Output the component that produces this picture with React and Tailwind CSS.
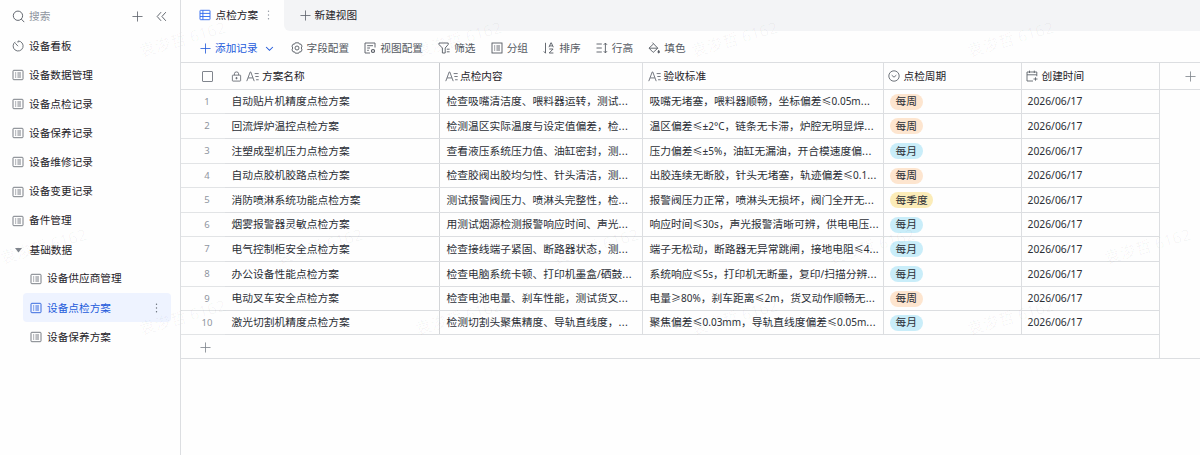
import clsx from "clsx";

const menu = [
  "设备数据管理",
  "设备点检记录",
  "设备保养记录",
  "设备维修记录",
  "设备变更记录",
  "备件管理",
];

const subMenu = ["设备供应商管理", "设备点检方案", "设备保养方案"];

const rows = [
  ["自动贴片机精度点检方案", "检查吸嘴清洁度、喂料器运转，测试...", "吸嘴无堵塞，喂料器顺畅，坐标偏差≤0.05m...", "每周"],
  ["回流焊炉温控点检方案", "检测温区实际温度与设定值偏差，检...", "温区偏差≤±2°C，链条无卡滞，炉腔无明显焊...", "每周"],
  ["注塑成型机压力点检方案", "查看液压系统压力值、油缸密封，测...", "压力偏差≤±5%，油缸无漏油，开合模速度偏...", "每月"],
  ["自动点胶机胶路点检方案", "检查胶阀出胶均匀性、针头清洁，测...", "出胶连续无断胶，针头无堵塞，轨迹偏差≤0.1...", "每周"],
  ["消防喷淋系统功能点检方案", "测试报警阀压力、喷淋头完整性，检...", "报警阀压力正常，喷淋头无损坏，阀门全开无...", "每季度"],
  ["烟雾报警器灵敏点检方案", "用测试烟源检测报警响应时间、声光...", "响应时间≤30s，声光报警清晰可辨，供电电压...", "每月"],
  ["电气控制柜安全点检方案", "检查接线端子紧固、断路器状态，测...", "端子无松动，断路器无异常跳闸，接地电阻≤4...", "每月"],
  ["办公设备性能点检方案", "检查电脑系统卡顿、打印机墨盒/硒鼓...", "系统响应≤5s，打印机无断墨，复印/扫描分辨...", "每月"],
  ["电动叉车安全点检方案", "检查电池电量、刹车性能，测试货叉...", "电量≥80%，刹车距离≤2m，货叉动作顺畅无...", "每周"],
  ["激光切割机精度点检方案", "检测切割头聚焦精度、导轨直线度，...", "聚焦偏差≤0.03mm，导轨直线度偏差≤0.05m...", "每月"],
];

const tagColors = {
  每周: "bg-[#fde5cf]",
  每月: "bg-[#c9edf9]",
  每季度: "bg-[#fbecb8]",
};

const columns = "grid grid-cols-[44px_215px_203px_241px_138px_138px_1fr]";

const Svg = ({ size = 12, className, children }) => (
  <svg
    width={size}
    height={size}
    viewBox="0 0 12 12"
    fill="none"
    stroke="currentColor"
    strokeWidth="0.9"
    className={clsx("shrink-0", className)}
  >
    {children}
  </svg>
);

const Plus = ({ size = 11, className }) => (
  <Svg size={size} className={className}>
    <path d="M6 .5v11M.5 6h11" />
  </Svg>
);

const ListIcon = () => (
  <Svg>
    <rect x="1" y="1.3" width="10" height="9.4" rx="0.8" />
    <path d="M3 4h1.2M3 6h1.2M3 8h1.2M5.4 4H9M5.4 6H9M5.4 8H9" />
  </Svg>
);

const TextIcon = () => (
  <Svg size={13} className="text-[#72767e]">
    <path d="M.7 10.3 3.9 1.8h.5l3.2 8.5M1.9 7.3h4.5M8 3.3h3.7M8.6 6h3.1M9.3 9h2.4" />
  </Svg>
);

const Dots = ({ className }) => (
  <svg width="3" height="10" viewBox="0 0 3 10" fill="currentColor" className={clsx("shrink-0", className)}>
    <circle cx="1.5" cy="1.2" r="0.7" />
    <circle cx="1.5" cy="5" r="0.7" />
    <circle cx="1.5" cy="8.8" r="0.7" />
  </svg>
);

// figures and units run a little narrower than the Chinese text around them
const CellText = ({ text }) => (
  <span>
    {text.split(/(\.\.\.$|[\w.%≤≥±°/]*[\w%≤≥±°/])/).map((part, i) => {
      if (part === "...") return <span key={i} className="tracking-[0.3px]">{part}</span>;
      if (i % 2) return <span key={i} className="text-[10px]">{part}</span>;
      return part;
    })}
  </span>
);

const tools = [
  {
    label: "字段配置",
    icon: (
      <>
        <path d="m4.3.8-.7 1.3-1.6.1L1 4.1l.7 1.9L1 7.9l1 1.9 1.6.1.7 1.3h3.4l.7-1.3 1.6-.1 1-1.9-.7-1.9.7-1.9-1-1.9-1.6-.1L7.7.8z" />
        <circle cx="6" cy="6" r="2" />
      </>
    ),
  },
  {
    label: "视图配置",
    icon: (
      <>
        <path d="M11 5.5V1H1v10h5M3.2 3.7h5.8M3.2 6H6M3.2 8.3h1.6" />
        <circle cx="9" cy="9" r="1.5" strokeWidth="1.2" />
      </>
    ),
  },
  {
    label: "筛选",
    icon: <path d="M1 1h9.2v1.5L7.2 6v5H4.4V6L1 2.5zM8.8 7.2h2.8M8.8 9.8h2.8" />,
  },
  {
    label: "分组",
    icon: (
      <>
        <rect x="1" y="1" width="10" height="10" />
        <path d="M3 4h1.2M3 6h1.2M3 8h1.2M5.4 4H9M5.4 6H9M5.4 8H9" />
      </>
    ),
  },
  {
    label: "排序",
    icon: <path d="M2.5.8v10.4L.8 9.4M6 5.2 7.9.8h.4l2 4.4M6.6 3.9h3M6.2 7h3.9l-3.9 4h4.2" />,
  },
  {
    label: "行高",
    icon: <path d="M.5 2h5.3M.5 6h5.3M.5 10h5.3M9.4 1.2v9.6M7.8 2.8l1.6-1.7L11 2.8M7.8 9.2l1.6 1.7L11 9.2" />,
  },
  {
    label: "填色",
    icon: (
      <>
        <path d="M4.4.6 5.6 1.800 1 6.200l4.200 4.200 4.600-4.200-4.200-4.400M1.200 6.200h8.400" />
        <path d="M10.700 8.300c-1 1.400-1 2.600 0 2.600s1-1.200 0-2.600z" fill="currentColor" />
      </>
    ),
  },
];

const marks = [
  "left-[138px] top-[31px]",
  "left-[414px] top-[31px]",
  "left-[690px] top-[31px]",
  "left-[966px] top-[31px]",
  "left-[-1px] top-[238px]",
  "left-[275px] top-[238px]",
  "left-[551px] top-[238px]",
  "left-[827px] top-[238px]",
  "left-[1103px] top-[238px]",
  "left-[138px] top-[309px]",
  "left-[414px] top-[309px]",
  "left-[690px] top-[309px]",
  "left-[966px] top-[309px]",
];

const Sidebar = () => (
  <aside className="w-[181px] shrink-0 border-r border-[#dcdee1]">
    <div className="flex h-[31.5px] items-center pt-[2px] pr-[12px] pl-[12px] text-[#5f646c]">
      <Svg size={13}>
        <circle cx="5.5" cy="5.3" r="4.3" />
        <path d="m8.600 8.400 2.700 2.800" />
      </Svg>
      <span className="ml-[4px] flex-1 text-[#8f959e]">搜索</span>
      <Plus />
      <Svg size={13} className="ml-[12px]">
        <path d="M5.600 2 2 6l3.600 4M10 2 6.400 6l3.600 4" />
      </Svg>
    </div>
    <div className="flex h-[29.1px] items-center gap-[5px] pl-[12px]">
      <Svg className="text-[#5f646c]">
        <path d="M3.400 1.800A5 5 0 1 0 6 1M6 1v1.600M3.300 3.200 6 6.200" />
      </Svg>
      设备看板
    </div>
    {menu.map((name) => (
      <div key={name} className="flex h-[29.1px] items-center gap-[5px] pl-[12px]">
        <span className="text-[#6b7078]">
          <ListIcon />
        </span>
        {name}
      </div>
    ))}
    <div className="flex h-[29.1px] items-center gap-[7.5px] pt-px pl-[15px]">
      <svg width="7" height="5" viewBox="0 0 7 5" className="fill-[#80858d]">
        <path d="M0 0h7L3.500 4.600z" />
      </svg>
      基础数据
    </div>
    {subMenu.map((name) => {
      const active = name === "设备点检方案";
      return (
        <div
          key={name}
          className={clsx(
            "mr-[9px] ml-[23px] flex h-[29.1px] items-center gap-[5px] rounded pr-[13px] pl-[7px]",
            active && "bg-[#eef3ff] text-[#245bdb]"
          )}
        >
          <span className={active ? "text-[#245bdb]" : "text-[#6b7078]"}>
            <ListIcon />
          </span>
          <span className="flex-1">{name}</span>
          {active && <Dots className="text-[#646a73]" />}
        </div>
      );
    })}
  </aside>
);

const TabBar = () => (
  <div className="flex h-[31px] bg-[#f3f4f6]">
    <div className="w-[103px] bg-[#fefefe]">
      <div className="flex h-[30px] items-center pl-[18px]">
        <Svg className="text-[#2c66ee]">
          <rect x="1" y="1.300" width="10" height="9.400" rx="0.6" />
          <path d="M3.900 1.300v9.400M1 4.400h10M1 7.500h10" />
        </Svg>
        <span className="ml-[4.5px]">点检方案</span>
        <Dots className="ml-[9px] text-[#8f959e]" />
      </div>
    </div>
    {/* curved foot of the active tab */}
    <div className="flex flex-1 bg-[#fefefe]">
      <div className="flex flex-1 items-center rounded-bl-md bg-[#f3f4f6] pl-[15.5px]">
        <Plus className="text-[#5f646c]" />
        <span className="ml-[4px]">新建视图</span>
      </div>
    </div>
  </div>
);

const Toolbar = () => (
  <div className="flex h-[31px] items-center pt-[3px] pl-[19px] text-[#555a62]">
    <div className="mr-[17px] flex items-center text-[#245bdb]">
      <Plus />
      <span className="ml-[4px]">添加记录</span>
      <Svg size={9} className="ml-[7px]">
        <path d="m1.500 4 4.500 4.500L10.500 4" strokeWidth="1.4" />
      </Svg>
    </div>
    <div className="flex items-center gap-[15.3px]">
      {tools.map((tool) => (
        <div key={tool.label} className="flex items-center gap-[3.9px]">
          <Svg>{tool.icon}</Svg>
          {tool.label}
        </div>
      ))}
    </div>
  </div>
);

const Table = () => (
  <div className="grid grid-rows-[28px_24px_25px_25px_24px_25px_24px_25px_25px_24px_24px_24px]">
    <div className={clsx(columns, "border-y border-[#dcdee1]")}>
      <div className="flex items-center pl-[21px]">
        <div className="size-[11px] rounded-[1px] border border-[#80858d]" />
      </div>
      <div className="flex items-center pl-[6px] shadow-[inset_-1px_0_#c6c8cc]">
        <Svg size={11} className="text-[#5f646c]">
          <rect x="1.500" y="4.500" width="9" height="6.500" rx="0.6" />
          <path d="M3.700 4.500V3a2.300 2 0 0 1 4.600 0v1.500M6 6.500v2.600M4.800 7.800h2.400" />
        </Svg>
        <span className="mr-[3px] ml-[4px]">
          <TextIcon />
        </span>
        方案名称
      </div>
      <div className="flex items-center gap-[2px] border-r border-[#dcdee1] pl-[5px]">
        <TextIcon />
        点检内容
      </div>
      <div className="flex items-center gap-[2.500px] border-r border-[#dcdee1] pl-[5px]">
        <TextIcon />
        验收标准
      </div>
      <div className="flex items-center gap-[4px] border-r border-[#dcdee1] pl-[3.5px]">
        <Svg className="text-[#5f646c]">
          <circle cx="6" cy="6" r="5.200" />
          <path d="m3.700 5.200 2.300 2 2.300-2" />
        </Svg>
        点检周期
      </div>
      <div className="flex items-center gap-[3.5px] border-r border-[#dcdee1] pl-[4px]">
        <Svg className="text-[#5f646c]">
          <path d="M10.800 6.200V2H1v9h6M1 4.800h9.800M3.500.6V3M8.300.6V3M7.500 9h4M9.500 7.300v3.400" />
        </Svg>
        创建时间
      </div>
      <div className="flex items-center pl-[25px]">
        <Plus className="text-[#80858d]" />
      </div>
    </div>
    {rows.map(([name, content, standard, cycle], idx) => (
      <div key={name} className={clsx(columns, "text-[10.75px] whitespace-nowrap text-[#2b2f36]")}>
        <div className="flex items-center justify-center border-b border-[#e2e4e6] pl-[8px] text-[9.5px] text-[#8f959e]">
          {idx + 1}
        </div>
        <div className="flex items-center border-b border-[#dcdee1] pl-[6.5px] shadow-[inset_-1px_0_#d3d5d8]">
          {name}
        </div>
        <div className="flex items-center border-r border-b border-[#dcdee1] pl-[6.5px]">
          <CellText text={content} />
        </div>
        <div className="flex items-center border-r border-b border-[#dcdee1] pl-[6.5px]">
          <CellText text={standard} />
        </div>
        <div className="flex items-center border-r border-b border-[#dcdee1] pl-[6px]">
          <span className={clsx("flex h-[16px] items-center rounded-full px-[5.6px]", tagColors[cycle])}>
            {cycle}
          </span>
        </div>
        <div className="flex items-center border-r border-b border-[#dcdee1] pl-[5.5px] text-[10.3px]">
          2026/06/17
        </div>
      </div>
    ))}
    <div className="flex border-b border-[#dcdee1]">
      <div className="flex w-[979px] items-center border-r border-[#dcdee1] pt-px pl-[19px]">
        <Plus className="text-[#80858d]" />
      </div>
    </div>
  </div>
);

export default function App() {
  return (
    <div
      lang="zh-CN"
      className="relative flex h-[455px] w-[1200px] overflow-hidden bg-[#fefefe] font-['Noto_Sans','Noto_Sans_CJK_SC',sans-serif] text-[10.67px] leading-none text-[#1f2329]"
    >
      <Sidebar />
      <main className="min-w-0 flex-1">
        <TabBar />
        <Toolbar />
        <Table />
      </main>
      {marks.map((pos) => (
        <span
          key={pos}
          className={clsx(
            "pointer-events-none absolute -rotate-[16deg] text-[16px] whitespace-nowrap text-black/[0.035]",
            pos
          )}
        >
          袁浚哲 6162
        </span>
      ))}
    </div>
  );
}
